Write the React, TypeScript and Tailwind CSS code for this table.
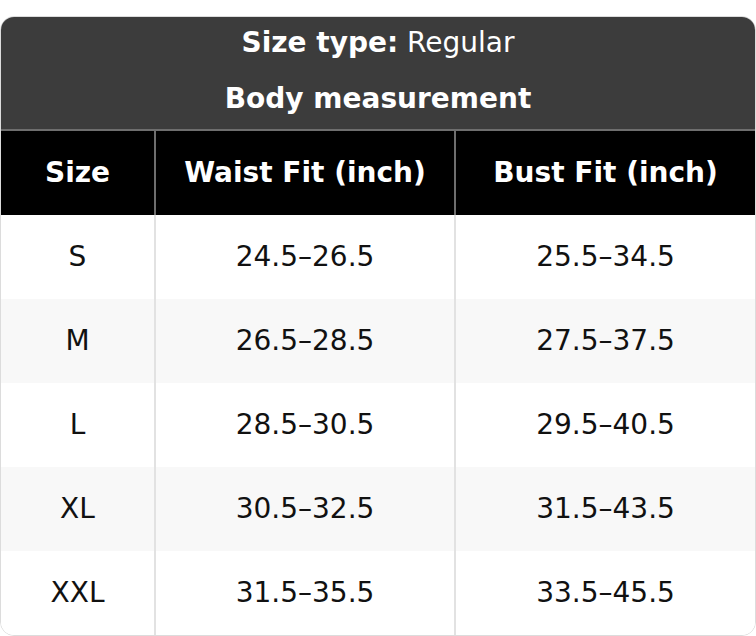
const rows = [
  { size: "S", waist: "24.5–26.5", bust: "25.5–34.5" },
  { size: "M", waist: "26.5–28.5", bust: "27.5–37.5" },
  { size: "L", waist: "28.5–30.5", bust: "29.5–40.5" },
  { size: "XL", waist: "30.5–32.5", bust: "31.5–43.5" },
  { size: "XXL", waist: "31.5–35.5", bust: "33.5–45.5" },
];

const App = () => {
  return (
    <div className="bg-white pt-4" style={{ fontFamily: '"DejaVu Sans", sans-serif' }}>
      <div className="w-[756px] rounded-[14px] border border-[#dcdcdc] overflow-hidden text-[28px]">
        {/* Title */}
        <div className="bg-[#3c3c3c] text-white border-b-2 border-[#6e6e6e]">
          <div className="h-[54px] pb-[2px] flex items-center justify-center">
            <b>Size type:</b>&nbsp;Regular
          </div>
          <div className="h-[58px] pb-[2px] flex items-center justify-center font-bold">
            Body measurement
          </div>
        </div>

        {/* Column headers */}
        <div className="grid grid-cols-[155px_300px_1fr] h-[84px] bg-black text-white font-bold">
          <div className="flex items-center justify-center border-r-2 border-[#6e6e6e]">Size</div>
          <div className="flex items-center justify-center border-r-2 border-[#6e6e6e]">Waist Fit (inch)</div>
          <div className="flex items-center justify-center">Bust Fit (inch)</div>
        </div>

        {/* Body */}
        {rows.map((r, i) => (
          <div
            key={r.size}
            className={`grid grid-cols-[155px_300px_1fr] h-[84px] text-[#111] ${i % 2 === 1 ? "bg-[#f8f8f8]" : "bg-white"}`}
          >
            <div className="flex items-center justify-center border-r-2 border-[#e2e2e2]">{r.size}</div>
            <div className="flex items-center justify-center border-r-2 border-[#e2e2e2]">{r.waist}</div>
            <div className="flex items-center justify-center">{r.bust}</div>
          </div>
        ))}
      </div>
    </div>
  );
};

export default App;
